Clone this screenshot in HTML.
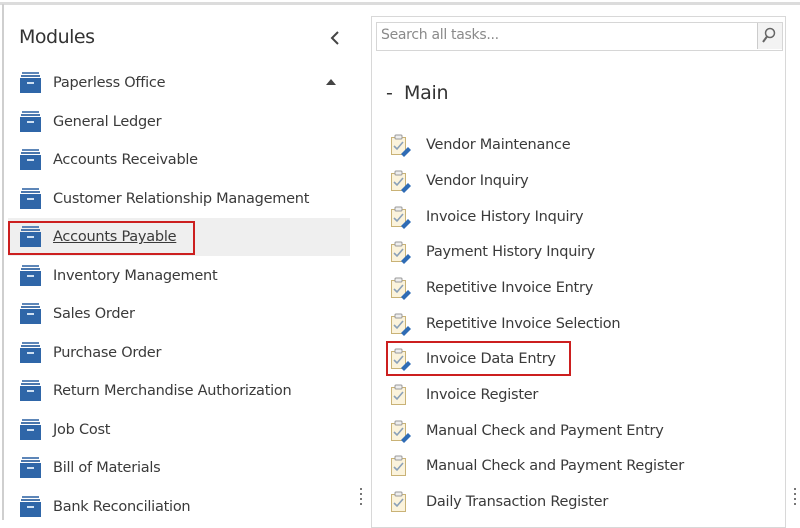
<!DOCTYPE html>
<html><head><meta charset="utf-8"><style>
body{margin:0;width:800px;height:520px;background:#fff;position:relative;overflow:hidden;font-family:"DejaVu Sans","Liberation Sans",sans-serif;color:#3a3a3a}
.a{position:absolute}
.topline{left:0;top:2px;width:800px;height:3px;background:#dcdcdc}
.leftline{left:2px;top:4px;width:2px;height:516px;background:#cfcfcf}
.li{position:absolute;left:20px;font-size:14.5px;letter-spacing:-0.25px;height:20px;line-height:20px}
.li svg{position:absolute;left:0;top:-1px}
.li span{position:absolute;left:33px;white-space:nowrap}
.ri{position:absolute;left:390px;font-size:14.5px;letter-spacing:-0.25px;height:22px;line-height:22px}
.ri svg{position:absolute;left:0;top:0}
.ri span{position:absolute;left:36px;white-space:nowrap}
.dots{width:2px;height:2px;background:#777;box-shadow:0 5px #777,0 10px #777,0 15px #777}
</style></head><body>
<div class="a topline"></div>
<div class="a leftline"></div>
<div class="a" style="left:19px;top:26px;font-size:19px;letter-spacing:-0.5px;color:#333">Modules</div>
<svg class="a" style="left:330px;top:31px" width="10" height="14"><path d="M8 1 L2 7 L8 13" stroke="#444" stroke-width="2" fill="none"/></svg>
<svg class="a" style="left:326px;top:79px" width="10" height="7"><path d="M0 6 L5 0 L10 6Z" fill="#444"/></svg>
<div class="a" style="left:8px;top:218px;width:342px;height:38px;background:#efefef"></div>
<div class="a" style="left:8px;top:221px;width:183px;height:30px;border:2px solid #cc1f1f"></div>

<svg width="0" height="0" style="position:absolute"><defs>
<g id="box"><rect x="2" y="0" width="17" height="2" fill="#5d86b8"/><rect x="1" y="3" width="19" height="2" fill="#4b77ad"/><rect x="0" y="6" width="21" height="15" fill="#2f66a8"/><rect x="7" y="10" width="7" height="2" fill="#cfe0f2"/></g>
<g id="clipE"><rect x="1.5" y="3.5" width="14" height="17" fill="#fbf3dc" stroke="#c9b276"/><rect x="5" y="1" width="7" height="4" rx="1" fill="#eee" stroke="#999"/><path d="M4 12 l3 3 l6 -7" stroke="#8aa0b8" stroke-width="1.6" fill="none"/><path d="M11 20 l7 -7 l3 3 l-7 7z" fill="#2f6cb5"/></g>
<g id="clipR"><rect x="1.5" y="3.5" width="14" height="17" fill="#fbf3dc" stroke="#c9b276"/><rect x="5" y="1" width="7" height="4" rx="1" fill="#eee" stroke="#999"/><path d="M4 12 l3 3 l6 -7" stroke="#8aa0b8" stroke-width="1.6" fill="none"/></g>
</defs></svg>

<div class="li" style="top:73px"><svg width="21" height="22"><use href="#box"/></svg><span>Paperless Office</span></div>
<div class="li" style="top:112px"><svg width="21" height="22"><use href="#box"/></svg><span>General Ledger</span></div>
<div class="li" style="top:150px"><svg width="21" height="22"><use href="#box"/></svg><span>Accounts Receivable</span></div>
<div class="li" style="top:189px"><svg width="21" height="22"><use href="#box"/></svg><span>Customer Relationship Management</span></div>
<div class="li" style="top:227px"><svg width="21" height="22"><use href="#box"/></svg><span style="text-decoration:underline">Accounts Payable</span></div>
<div class="li" style="top:266px"><svg width="21" height="22"><use href="#box"/></svg><span>Inventory Management</span></div>
<div class="li" style="top:304px"><svg width="21" height="22"><use href="#box"/></svg><span>Sales Order</span></div>
<div class="li" style="top:343px"><svg width="21" height="22"><use href="#box"/></svg><span>Purchase Order</span></div>
<div class="li" style="top:381px"><svg width="21" height="22"><use href="#box"/></svg><span>Return Merchandise Authorization</span></div>
<div class="li" style="top:420px"><svg width="21" height="22"><use href="#box"/></svg><span>Job Cost</span></div>
<div class="li" style="top:458px"><svg width="21" height="22"><use href="#box"/></svg><span>Bill of Materials</span></div>
<div class="li" style="top:497px"><svg width="21" height="22"><use href="#box"/></svg><span>Bank Reconciliation</span></div>

<div class="a dots" style="left:360px;top:488px"></div>
<div class="a dots" style="left:794px;top:488px"></div>

<div class="a" style="left:371px;top:16px;width:413px;height:510px;border:1px solid #d8d8d8"></div>
<div class="a" style="left:376px;top:22px;width:405px;height:27px;border:1px solid #d6d6d6;background:#fff"></div>
<div class="a" style="left:381px;top:27px;font-size:14px;color:#8a8a8a;letter-spacing:-0.3px">Search all tasks...</div>
<div class="a" style="left:757px;top:23px;width:24px;height:26px;border-left:1px solid #ccc;background:#f3f3f3"></div>
<svg class="a" style="left:761px;top:27px" width="16" height="18"><circle cx="9" cy="6" r="4.5" stroke="#666" stroke-width="1.5" fill="none"/><path d="M6 9.5 L2 15" stroke="#666" stroke-width="2"/></svg>
<div class="a" style="left:386px;top:82px;font-size:19px;color:#333;letter-spacing:-0.3px">-&nbsp; Main</div>

<div class="a" style="left:386px;top:341px;width:181px;height:31px;border:2px solid #cc1f1f"></div>

<div class="ri" style="top:134px"><svg width="22" height="24"><use href="#clipE"/></svg><span>Vendor Maintenance</span></div>
<div class="ri" style="top:170px"><svg width="22" height="24"><use href="#clipE"/></svg><span>Vendor Inquiry</span></div>
<div class="ri" style="top:206px"><svg width="22" height="24"><use href="#clipE"/></svg><span>Invoice History Inquiry</span></div>
<div class="ri" style="top:241px"><svg width="22" height="24"><use href="#clipE"/></svg><span>Payment History Inquiry</span></div>
<div class="ri" style="top:277px"><svg width="22" height="24"><use href="#clipE"/></svg><span>Repetitive Invoice Entry</span></div>
<div class="ri" style="top:313px"><svg width="22" height="24"><use href="#clipE"/></svg><span>Repetitive Invoice Selection</span></div>
<div class="ri" style="top:348px"><svg width="22" height="24"><use href="#clipE"/></svg><span>Invoice Data Entry</span></div>
<div class="ri" style="top:384px"><svg width="22" height="24"><use href="#clipR"/></svg><span>Invoice Register</span></div>
<div class="ri" style="top:420px"><svg width="22" height="24"><use href="#clipE"/></svg><span>Manual Check and Payment Entry</span></div>
<div class="ri" style="top:455px"><svg width="22" height="24"><use href="#clipR"/></svg><span>Manual Check and Payment Register</span></div>
<div class="ri" style="top:491px"><svg width="22" height="24"><use href="#clipR"/></svg><span>Daily Transaction Register</span></div>
</body></html>
